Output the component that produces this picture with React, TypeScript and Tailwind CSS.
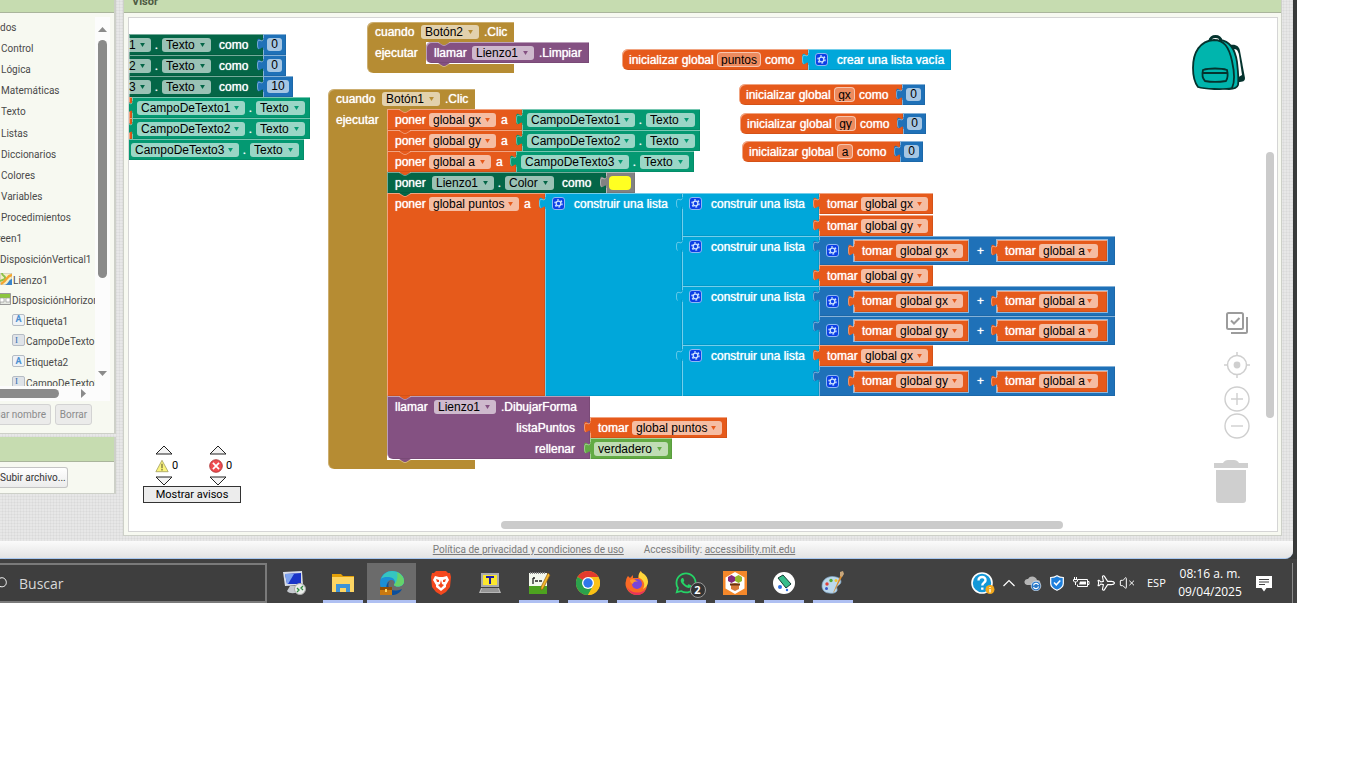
import React from 'react'
import clsx from 'clsx'
import { Plane, VolumeX } from 'lucide-react'
import { FaWhatsapp } from 'react-icons/fa'

// The text colour of a block repeats its fill, so plugs, notches and arrows can use currentColor
const tones = {
  gold: 'bg-[#b68c33] text-[#b68c33]',
  orange: 'bg-[#e65a1b] text-[#e65a1b]',
  setter: 'bg-[#046647] text-[#046647]',
  getter: 'bg-[#049972] text-[#049972]',
  purple: 'bg-[#845182] text-[#845182]',
  cyan: 'bg-[#00a7da] text-[#00a7da]',
  blue: 'bg-[#1f71b8] text-[#1f71b8]',
  green: 'bg-[#62ab44] text-[#62ab44]',
  gray: 'bg-[#828282] text-[#828282]',
}
type Tone = keyof typeof tones

const bevel =
  'shadow-[inset_1px_1px_0_rgba(255,255,255,0.45),inset_-1px_-1px_0_rgba(0,0,0,0.08)]'

interface BlockProps {
  tone: Tone
  className?: string
  children?: React.ReactNode
}

const Label = ({ className, children }: { className?: string; children: React.ReactNode }) => (
  <span
    className={clsx(
      'shrink-0 whitespace-nowrap text-[12px] leading-[14px] text-white [text-shadow:0_0_1px_#fff]',
      className
    )}
  >
    {children}
  </span>
)

const Dot = () => <Label className="w-[11px] text-center">.</Label>

const Field = ({ value, className, flush }: { value: string; className: string; flush?: boolean }) => (
  <span className={clsx('grid shrink-0 items-center', className)}>
    <select
      aria-label={value}
      defaultValue={value}
      className={clsx(
        'col-start-1 row-start-1 h-[14px] w-full appearance-none bg-white/60 text-[12px] leading-[14px] text-black',
        flush ? 'rounded-r-[3px]' : 'rounded-[3px] pl-1'
      )}
    >
      <option>{value}</option>
    </select>
    <svg
      viewBox="0 0 6 5"
      className="pointer-events-none col-start-1 row-start-1 mr-[6px] h-[4px] w-[5px] justify-self-end"
    >
      <path d="M0 0h6L3 5z" fill="currentColor" />
    </svg>
  </span>
)

const NameInput = ({ value, className }: { value: string; className: string }) => (
  <input
    aria-label="nombre"
    defaultValue={value}
    className={clsx(
      'h-[15px] shrink-0 rounded-[4px] border border-white/50 bg-white/30 text-center text-[12px] leading-[13px] text-black',
      className
    )}
  />
)

const Plug = () => (
  <svg viewBox="0 0 7 12" className="absolute top-1 -left-[6px] h-3 w-[7px]">
    <path d="M6.4 0c0 8-6.4-6.4-6.4 6s6.4-2 6.4 6H7V0z" fill="currentColor" />
    <path
      d="M6 1.500c-.8 4-5.500-3-5.500 4.500 0 3 .4 4.200 1.200 4.600"
      fill="none"
      stroke="#fff"
      strokeOpacity=".4"
    />
  </svg>
)

const Notch = ({ className }: { className: string }) => (
  <svg viewBox="0 0 12 4" className={clsx('absolute left-3 z-10 h-1 w-3', className)}>
    <path d="M0 0l5 3h2l5-3z" fill="currentColor" />
    <path d="M0 .5l5 3h2l5-3" fill="none" stroke="#fff" strokeOpacity=".35" />
  </svg>
)

const Value = ({ tone, className, children }: BlockProps) => (
  <div className={clsx('relative flex h-[21px] shrink-0 items-center', tones[tone], bevel, className)}>
    <Plug />
    {children}
  </div>
)

const Gear = () => (
  <button
    aria-label="configurar"
    className="flex h-[13px] w-[13px] shrink-0 items-center justify-center rounded-[3px] border border-[#8fb8f5] bg-[#0b3fe6]"
  >
    <svg viewBox="0 0 10 10" className="h-[9px] w-[9px]" fill="none" stroke="#cfe4ff">
      <circle cx="5" cy="5" r="2.600" strokeWidth="1.400" />
      <circle cx="5" cy="5" r="4" strokeWidth="1.500" strokeDasharray="2 2.190" />
    </svg>
  </button>
)

const Getter = ({ source }: { source: string }) => (
  <Value tone="getter" className="w-[178px] px-[5px]">
    <Field value={source} className="w-[108px]" />
    <Dot />
    <Field value="Texto" className="w-[49px]" />
  </Value>
)

const Take = ({ name, className, field }: { name: string; className?: string; field: string }) => (
  <Value tone="orange" className={clsx('pr-[5px] pl-2', className)}>
    <Label className="w-[34px]">tomar</Label>
    <Field value={name} className={field} />
  </Value>
)

const TakeGx = () => <Take name="global gx" field="w-[67px]" />
const TakeGy = () => <Take name="global gy" field="w-[67px]" />

const Sum = ({ name, className }: { name: string; className: string }) => (
  <Value tone="blue" className={clsx('w-[296px] pr-2 pl-[7px]', className)}>
    <Gear />
    <Take name={name} field="w-[67px]" className="ml-[15px] ring-1 ring-white/50" />
    <Label className="flex-1 pr-1 text-center">+</Label>
    <Take name="global a" field="w-[59px]" className="w-[110px] ring-1 ring-white/50" />
  </Value>
)

const ListBlock = ({ children }: { children: React.ReactNode }) => (
  <div className="flex">
    <div className={clsx('relative w-[137px] shrink-0', tones.cyan, bevel)}>
      <Plug />
      <div className="flex h-[21px] items-center gap-[9px] pl-[7px]">
        <Gear />
        <Label>construir una lista</Label>
      </div>
    </div>
    <div className="flex flex-col items-start">{children}</div>
  </div>
)

const SetGlobal = ({ name, field, width }: { name: string; field: string; width: string }) => (
  <div className={clsx('relative shrink-0', tones.orange, bevel, width)}>
    <div className="flex h-[21px] items-center pl-2">
      <Label className="w-[34px]">poner</Label>
      <Field value={name} className={field} />
      <Label className="ml-[5px]">a</Label>
    </div>
    <Notch className="top-full" />
  </div>
)

const SetProperty = ({ target, prop, field, partial, children }: {
  target: string
  prop: string
  field: string
  // only the tail of the block is inside the view
  partial?: boolean
  children: React.ReactNode
}) => (
  <div className="flex h-[21px]">
    <div
      className={clsx(
        'relative flex shrink-0 items-center pr-4',
        tones.setter,
        bevel,
        !partial && 'pl-2'
      )}
    >
      {!partial && <Label className="w-[37px]">poner</Label>}
      <Field value={target} className={field} flush={partial} />
      <Dot />
      <Field value={prop} className="w-[49px]" />
      <Label className="ml-2 w-7">como</Label>
      {!partial && <Notch className="top-full" />}
    </div>
    {children}
  </div>
)

const NumberValue = ({ value, wide }: { value: string; wide?: boolean }) => (
  <Value tone="blue" className={wide ? 'w-[30px] pl-[4px]' : 'w-[23px] pl-[4px]'}>
    <input
      aria-label="número"
      defaultValue={value}
      className={clsx(
        'h-[13px] rounded-[3px] bg-white/60 text-center text-[12px] leading-[13px] text-black',
        wide ? 'w-[22px]' : 'w-[15px]'
      )}
    />
  </Value>
)

const EventBlock = ({ button, className, children }: {
  button: string
  className: string
  children: React.ReactNode
}) => (
  <div className={clsx('absolute', className)}>
    <div className="flex h-5 w-[147px] items-center rounded-tl-[6px] bg-[#b68c33] pl-2 text-[#b68c33] shadow-[inset_1px_1px_0_rgba(255,255,255,0.3)]">
      <Label className="w-[46px]">cuando</Label>
      <Field value={button} className="w-[58px]" />
      <Label className="ml-[5px]">.Clic</Label>
    </div>
    <div className="flex">
      <div className="relative w-[59px] shrink-0 bg-[#b68c33] pl-2 shadow-[inset_1px_0_0_rgba(255,255,255,0.3)]">
        <Label className="block pt-1">ejecutar</Label>
      </div>
      <div className="relative pb-px text-[#b68c33]">
        <Notch className="top-0" />
        {children}
      </div>
    </div>
    <div className="h-[9px] w-[147px] rounded-bl-[6px] bg-[#b68c33] shadow-[inset_1px_0_0_rgba(255,255,255,0.3)]" />
  </div>
)

const GlobalBlock = ({ name, input, className, children }: {
  name: string
  input: string
  className: string
  children: React.ReactNode
}) => (
  <div className={clsx('absolute flex', className)}>
    <div className={clsx('flex h-[21px] items-center rounded-l-[6px] pr-[15px] pl-[7px]', tones.orange, bevel)}>
      <Label className="w-[88px]">inicializar global</Label>
      <NameInput value={name} className={input} />
      <Label className="ml-1 w-7">como</Label>
    </div>
    {children}
  </div>
)

const Triangle = ({ down }: { down?: boolean }) => (
  <svg viewBox="0 0 18 10" className="h-[10px] w-[18px]" fill="#f4f4f4" stroke="#222">
    <path d={down ? 'M1 1h16L9 9z' : 'M1 9h16L9 1z'} />
  </svg>
)

const Warnings = () => (
  <div className="absolute top-[427px] left-[14px] w-[98px] font-[Roboto,sans-serif] text-[11px] leading-[13px] text-black">
    <div className="flex h-[41px] justify-between pr-2 pl-3">
      <div className="flex w-6 flex-col justify-between">
        <Triangle />
        <span className="flex items-center gap-[3px]">
          <svg viewBox="0 0 16 16" className="h-[14px] w-[14px] shrink-0">
            <path d="M8 1.500L15 14.500H1z" fill="#fbf47c" stroke="#a9a565" strokeLinejoin="round" />
            <path d="M8 5.500v5M8 11.500v1.500" stroke="#6d6a3c" strokeWidth="1.400" />
          </svg>
          0
        </span>
        <Triangle down />
      </div>
      <div className="flex w-6 flex-col justify-between">
        <Triangle />
        <span className="flex items-center gap-[3px]">
          <svg viewBox="0 0 16 16" className="h-[14px] w-[14px] shrink-0">
            <circle cx="8" cy="8" r="7.200" fill="#ef4c50" stroke="#a33" />
            <path d="M4.500 4.500l7 7M11.500 4.500l-7 7" stroke="#fff" strokeWidth="2" />
          </svg>
          0
        </span>
        <Triangle down />
      </div>
    </div>
    <button className="h-[17px] w-full border border-[#333] bg-[#ececec] text-center leading-[14px]">
      Mostrar avisos
    </button>
  </div>
)

const Backpack = () => (
  <svg viewBox="0 0 54 56" className="absolute top-[17px] right-[31px] h-[56px] w-[54px]">
    <path d="M38 10c6-1 9 1 10 6l5 27c0 3-2 4-7 4z" fill="#05332e" />
    <path d="M42 14c3 0 4 2 5 6l3 20-5 3z" fill="#fff" />
    <path d="M18 6c0-6 11-6 11 0" fill="none" stroke="#05332e" strokeWidth="3" />
    <path
      d="M28 5c10 1 15 9 17 22 1 9 2 17 1 23-1 3-5 4-9 4l-14-2z"
      fill="#00b5ad"
      stroke="#05332e"
      strokeWidth="1.800"
    />
    <path
      d="M22 5C8 6 1 17 1 33c0 9 2 15 5 19 6 2 26 3 34 1 3-6 2-18 0-27C37 12 32 5 22 5z"
      fill="#00b5ad"
      stroke="#05332e"
      strokeWidth="1.800"
    />
    <path
      d="M11 35c6-2 18-2 24 0 1 4 1 8-1 11-6 1-16 1-21 0-3-3-3-7-2-11zM10 38h26"
      fill="none"
      stroke="#05332e"
      strokeWidth="1.800"
    />
  </svg>
)

const Controls = () => (
  <div className="absolute top-[293px] right-[27px] flex w-[36px] flex-col items-end text-[#cfcfcf]">
    <button aria-label="seleccionar" className="mr-px h-[24px] w-[24px]">
      <svg viewBox="0 0 24 24" fill="none" stroke="#9c9c9c" strokeWidth="2">
        <rect x="2" y="2" width="16" height="16" rx="1.500" />
        <path d="M6 9.500l3 3L14.500 7" />
        <path d="M22 6v14.500a1.500 1.500 0 0 1-1.500 1.500H6" />
      </svg>
    </button>
    <button aria-label="centrar" className="mt-[17px] h-[26px] w-[26px]">
      <svg viewBox="0 0 26 26" fill="none" stroke="currentColor" strokeWidth="1.500">
        <circle cx="13" cy="13" r="9.500" />
        <circle cx="13" cy="13" r="3.400" fill="currentColor" stroke="none" />
        <path d="M13 0v4M13 22v4M0 13h4M22 13h4" />
      </svg>
    </button>
    <button aria-label="acercar" className="mt-2 h-[26px] w-[26px]">
      <svg viewBox="0 0 26 26" fill="none" stroke="currentColor" strokeWidth="1.400">
        <circle cx="13" cy="13" r="12" />
        <path d="M7 13h12M13 7v12" />
      </svg>
    </button>
    <button aria-label="alejar" className="mt-px h-[26px] w-[26px]">
      <svg viewBox="0 0 26 26" fill="none" stroke="currentColor" strokeWidth="1.400">
        <circle cx="13" cy="13" r="12" />
        <path d="M7 13h12" />
      </svg>
    </button>
    <svg viewBox="0 0 34 44" className="mt-[21px] h-[44px] w-[34px] self-start" fill="currentColor">
      <path d="M0 3h9c1-2 3-3 5-3h6c2 0 4 1 5 3h9v5H0z" />
      <path d="M2 10h30v30a3 3 0 0 1-3 3H5a3 3 0 0 1-3-3z" />
    </svg>
  </div>
)

const Workspace = () => (
  <div className="relative h-[515px] overflow-hidden border border-[#d5d5d5] bg-white font-['Liberation_Sans',Arial,sans-serif]">
    <div className="absolute top-[16px] left-0">
      <SetProperty target="1" prop="Texto" field="w-[22px]" partial>
        <NumberValue value="0" />
      </SetProperty>
      <SetProperty target="2" prop="Texto" field="w-[22px]" partial>
        <NumberValue value="0" />
      </SetProperty>
      <SetProperty target="3" prop="Texto" field="w-[22px]" partial>
        <NumberValue value="10" wide />
      </SetProperty>
      <div className="flex">
        <div className={clsx('w-[3px]', tones.orange, bevel)} />
        <Getter source="CampoDeTexto1" />
      </div>
      <div className="flex">
        <div className={clsx('w-[3px]', tones.orange, bevel)} />
        <Getter source="CampoDeTexto2" />
      </div>
      <div className="-ml-[3px] flex">
        <Getter source="CampoDeTexto3" />
      </div>
    </div>

    <EventBlock button="Botón2" className="top-1 left-[238px]">
      <div className={clsx('relative flex h-[21px] w-[163px] items-center rounded-l-[5px] pl-2', tones.purple, bevel)}>
        <Label className="w-[38px]">llamar</Label>
        <Field value="Lienzo1" className="w-[62px]" />
        <Label className="ml-[5px]">.Limpiar</Label>
        <Notch className="top-full" />
      </div>
    </EventBlock>

    <EventBlock button="Botón1" className="top-[71px] left-[199px]">
      <div className="flex">
        <SetGlobal name="global gx" field="w-[67px]" width="w-[135px]" />
        <Getter source="CampoDeTexto1" />
      </div>
      <div className="flex">
        <SetGlobal name="global gy" field="w-[67px]" width="w-[135px]" />
        <Getter source="CampoDeTexto2" />
      </div>
      <div className="flex">
        <SetGlobal name="global a" field="w-[62px]" width="w-[129px]" />
        <Getter source="CampoDeTexto3" />
      </div>
      <SetProperty target="Lienzo1" prop="Color" field="w-[62px]">
        <Value tone="gray" className="w-[29px] pl-[3px]">
          <button aria-label="color" className="h-[14px] w-[22px] rounded-[4px] bg-[#ffff22]" />
        </Value>
      </SetProperty>
      <div className="flex">
        <SetGlobal name="global puntos" field="w-[90px]" width="w-[158px]" />
        <ListBlock>
          <ListBlock>
            <TakeGx />
            <div className="pt-px">
              <TakeGy />
            </div>
          </ListBlock>
          <ListBlock>
            <Sum name="global gx" className="h-[29px]" />
            <TakeGy />
          </ListBlock>
          <ListBlock>
            <Sum name="global gx" className="h-[30px]" />
            <Sum name="global gy" className="h-[29px]" />
          </ListBlock>
          <ListBlock>
            <TakeGx />
            <Sum name="global gy" className="h-[30px]" />
          </ListBlock>
        </ListBlock>
      </div>
      <div className="flex">
        <div className={clsx('relative w-[203px] rounded-bl-[6px] pr-[15px] pl-2', tones.purple, bevel)}>
          <div className="flex h-[21px] items-center">
            <Label className="w-[39px]">llamar</Label>
            <Field value="Lienzo1" className="w-[62px]" />
            <Label className="ml-[5px]">.DibujarForma</Label>
          </div>
          <div className="flex h-[21px] items-center justify-end">
            <Label>listaPuntos</Label>
          </div>
          <div className="flex h-[21px] items-center justify-end">
            <Label>rellenar</Label>
          </div>
          <Notch className="top-full" />
        </div>
        <div className="flex flex-col items-start pt-[21px]">
          <Take name="global puntos" field="w-[90px]" />
          <Value tone="green" className="px-1">
            <Field value="verdadero" className="w-[74px]" />
          </Value>
        </div>
      </div>
    </EventBlock>

    <GlobalBlock name="puntos" input="w-[44px]" className="top-[31px] left-[493px]">
      <Value tone="cyan" className="w-[143px] gap-[9px] pl-[7px]">
        <Gear />
        <Label>crear una lista vacía</Label>
      </Value>
    </GlobalBlock>
    <GlobalBlock name="gx" input="w-[21px]" className="top-[66px] left-[610px]">
      <NumberValue value="0" />
    </GlobalBlock>
    <GlobalBlock name="gy" input="w-[21px]" className="top-[95px] left-[611px]">
      <NumberValue value="0" />
    </GlobalBlock>
    <GlobalBlock name="a" input="w-4" className="top-[123px] left-[613px]">
      <NumberValue value="0" />
    </GlobalBlock>

    <Backpack />
    <Controls />
    <Warnings />
    <div className="absolute top-[134px] right-[3px] h-[266px] w-2 rounded-full bg-[#cbcbcb]" />
    <div className="absolute right-[214px] bottom-[2px] h-2 w-[562px] rounded-full bg-[#cbcbcb]" />
  </div>
)

const categories = [
  'Control',
  'Lógica',
  'Matemáticas',
  'Texto',
  'Listas',
  'Diccionarios',
  'Colores',
  'Variables',
  'Procedimientos',
]

const LetterIcon = ({ children, wide }: { children: string; wide?: boolean }) => (
  <span
    className={clsx(
      'mb-1 flex h-3 w-[13px] shrink-0 items-center rounded-[2px] border border-[#b5bcc4] text-[9px] leading-none',
      wide
        ? "bg-[#dfe3e8] pl-[2px] font-['Liberation_Serif',serif] text-[#2f6fb0]"
        : 'justify-center bg-[#eef2f6] font-bold text-[#4a8fd0]'
    )}
  >
    {children}
  </span>
)

const TreePanel = () => (
  <section className="border-r-2 border-b border-[#cdd0c8] bg-[#f7f9f1]">
    <div className="h-[13px] border-b border-[#aab59c] bg-[#c6dcb0]" />
    <div className="flex h-[373px] overflow-hidden pt-1 text-[10px] leading-3 text-[#4a4a4a]">
      <div className="w-[95px] shrink-0 overflow-hidden whitespace-nowrap">
        <ul className="grid h-[212px] auto-rows-fr items-center">
          <li>dos</li>
          {categories.map((name) => (
            <li key={name} className="pl-px">
              {name}
            </li>
          ))}
        </ul>
        <ul className="grid h-[165px] auto-rows-fr items-center">
          <li className="-ml-[3px]">reen1</li>
          <li>DisposiciónVertical1</li>
          <li className="flex items-center gap-px">
            <svg viewBox="0 0 12 12" className="mb-1 h-3 w-3 shrink-0">
              <path d="M0 0h12v12H0z" fill="#f5efc8" stroke="#bbb" />
              <path d="M2 0c0 4 4 2 3 6L0 8" fill="none" stroke="#8cc24a" strokeWidth="2" />
              <path d="M12 2C6 3 8 7 1 11" fill="none" stroke="#f3a530" strokeWidth="2.500" />
              <path d="M12 6c-3 0-3 4-7 6h7z" fill="#3b86cc" />
            </svg>
            Lienzo1
          </li>
          <li className="flex items-center gap-px">
            <svg viewBox="0 0 11 12" className="mb-1 h-3 w-[11px] shrink-0">
              <path d="M0 .5h10.500v11H0z" fill="#e5e8e2" stroke="#999" />
              <path d="M0 1h10v4H0z" fill="#8cc63e" />
              <path d="M0 5h4v4H0zM6 5h4v4H6z" fill="#fff" stroke="#999" strokeWidth=".7" />
            </svg>
            DisposiciónHorizon
          </li>
          <li className="flex items-center gap-px pl-3">
            <LetterIcon>A</LetterIcon>Etiqueta1
          </li>
          <li className="flex items-center gap-px pl-3">
            <LetterIcon wide>I</LetterIcon>CampoDeTexto1
          </li>
          <li className="flex items-center gap-px pl-3">
            <LetterIcon>A</LetterIcon>Etiqueta2
          </li>
          <li className="flex items-center gap-px pl-3">
            <LetterIcon wide>I</LetterIcon>CampoDeTexto2
          </li>
        </ul>
      </div>
      <div className="flex w-[15px] flex-col items-center bg-[#fcfcfc] pt-[10px] pb-2">
        <svg viewBox="0 0 9 5" className="h-[5px] w-[9px]">
          <path d="M0 5h9L4.500 0z" fill="#8b8b8b" />
        </svg>
        <div className="mt-2 h-[238px] w-[9px] rounded-full bg-[#8b8b8b]" />
        <svg viewBox="0 0 9 5" className="mt-auto mb-[2px] h-[5px] w-[9px]">
          <path d="M0 0h9L4.500 5z" fill="#8b8b8b" />
        </svg>
      </div>
    </div>
    <div className="mr-1 flex h-[15px] items-center bg-[#fcfcfc]">
      <div className="h-[9px] w-[59px] rounded-r-full bg-[#8b8b8b]" />
      <svg viewBox="0 0 5 9" className="ml-[22px] h-[9px] w-[5px]">
        <path d="M0 0v9l5-4.500z" fill="#8b8b8b" />
      </svg>
    </div>
    <div className="flex gap-1 pt-[3px] pb-2 text-[10px] text-[#8a8a8a]">
      <button className="flex h-[21px] w-[51px] justify-end rounded-r-[3px] border border-l-0 border-[#d3d3d3] bg-[#ebebea] pr-1 leading-[19px] whitespace-nowrap">
        iar nombre
      </button>
      <button className="h-[21px] w-[37px] rounded-[3px] border border-[#d3d3d3] bg-[#ebebea] leading-[19px]">
        Borrar
      </button>
    </div>
  </section>
)

const MediaPanel = () => (
  <section className="border-r-2 border-b border-[#cdd0c8] bg-[#f7f9f1]">
    <div className="h-[25px] border-b border-[#aab59c] bg-[#c6dcb0]" />
    <div className="flex py-[5px]">
      <button className="h-[21px] w-[68px] rounded-r-[3px] border border-l-0 border-[#c4c4c4] bg-linear-to-b from-white to-[#ececec] text-left text-[10px] leading-[19px] whitespace-nowrap text-[#333]">
        Subir archivo...
      </button>
    </div>
  </section>
)

interface TaskProps {
  label: string
  open?: boolean
  active?: boolean
  children: React.ReactNode
}

const Task = ({ label, open, active, children }: TaskProps) => (
  <button
    aria-label={label}
    className={clsx('flex h-10 w-[49px] flex-col items-center', active && 'bg-[#6b6b6b]')}
  >
    <span className="flex h-[37px] w-6 items-center pt-[3px]">{children}</span>
    <span className={clsx('h-[3px]', active ? 'w-full' : 'w-10', open && 'bg-[#afc0f2]')} />
  </button>
)

const Taskbar = () => (
  <footer className="flex h-11 items-start bg-[#414141] pt-1 font-['Open_Sans',sans-serif] text-white">
    <div className="flex h-10 w-[267px] shrink-0 items-center gap-3 border-2 border-l-0 border-[#7a7a7a] bg-[#3e3e3e]">
      <svg viewBox="0 0 7 12" className="h-3 w-[7px]" fill="none" stroke="#fff">
        <path d="M0 1.200c3-1.500 6.300.8 6.300 4.300S3 10.500 0 9.500" />
      </svg>
      <input
        aria-label="Buscar"
        placeholder="Buscar"
        className="w-40 bg-transparent text-[14px] placeholder:text-[#d8d8d8]"
      />
    </div>
    <div className="flex pl-[2px]">
      <Task label="Escritorio remoto">
        <svg viewBox="0 0 24 24">
          <path d="M1 1l19-1 1 14-18 1z" fill="#d8dde8" />
          <path d="M3 3l16-1v11L5 13z" fill="#1a35c8" />
          <path d="M3 3l9 0-6 10H5z" fill="#7fa4f0" />
          <path d="M8 15h7l2 5c-3 3-10 3-12 0z" fill="#c5c9ce" />
          <circle cx="18" cy="18" r="5.500" fill="#e9ece9" stroke="#aaa" />
          <path d="M15 17l2 2-2 2M21 15l-2 2 2 2" stroke="#2e8b3e" fill="none" strokeWidth="1.300" />
        </svg>
      </Task>
      <Task label="Explorador" open>
        <svg viewBox="0 0 24 24">
          <path d="M1 3h9l2 2h11v16H1z" fill="#e3a008" />
          <path d="M1 6h22v15H1z" fill="#fdd563" />
          <path d="M5 21v-8h14v8h-4v-4H9v4z" fill="#3d93d8" />
        </svg>
      </Task>
      <Task label="Edge" open active>
        <svg viewBox="0 0 24 24">
          <path d="M0 12C0 4 6 0 12 0s12 4 12 10c0 4-3 5.500-6 5.500s-4-1-4-2c1-1 1-4-2-4.500C6 8 4 18 12 23 5 23 0 18 0 12z" fill="#1b8fd6" />
          <path d="M1 8C3 3 7 0 12 0c7 0 12 4.500 12 10 0 4-3 5.500-6 5.500-2 0-4-.6-4-2 2-2 1-6-3-7C7 5.500 3 6 1 8z" fill="#36c5c0" />
          <path d="M17 1.200c4 1.800 7 5 7 8.800 0 4-3 5.500-6 5.500-2 0-4-.6-4-2 3-2 4-8 3-12.300z" fill="#66d36a" />
          <path d="M10 10c-4 4-1 13 12 8-2 4-6 6-10 6-6 0-8-11-2-14z" fill="#0c4f9c" />
          <path d="M0 16h12v8H0z" fill="#c9780f" />
          <path d="M0 16h12v3H0z" fill="#8e4d06" />
          <path d="M5 18h2v3H5z" fill="#ffd45c" />
        </svg>
      </Task>
      <Task label="Brave">
        <svg viewBox="0 0 24 24">
          <path d="M7 0h10l2 2 2 0 1 4-1 10-4 5-5 3-5-3-4-5L2 6l1-4h2z" fill="#f4481e" />
          <path d="M6 5l4 1h4l4-1 2 4-3 5 0 2-5 4-5-4V14L4 9z" fill="#fff" />
          <path d="M7 8l3 1v2l-2 0zM17 8l-3 1v2l2 0zM12 9l1 4 2 1-3 3-3-3 2-1z" fill="#f4481e" />
        </svg>
      </Task>
      <Task label="Terminal">
        <svg viewBox="0 0 24 24">
          <path d="M3 2h18v14H3z" fill="#aaa" />
          <path d="M5 4h14v10H5z" fill="#fde82c" />
          <path d="M8 5h8v2h-3v6h-2V7H8z" fill="#1c1ca8" />
          <path d="M3 17h18l2 5H1z" fill="#b7b7b7" />
          <path d="M4 18h16M3 20h18" stroke="#777" />
        </svg>
      </Task>
      <Task label="Notepad++" open>
        <svg viewBox="0 0 24 24">
          <path d="M2 2h18v21H2z" fill="#f4f8ee" />
          <path d="M2 15h18v8H2z" fill="#4da31f" />
          <path d="M3 2h16" stroke="#888" strokeWidth="2" strokeDasharray="1 1" />
          <path d="M6 7v6M8 10h3M12 10h3M6 7h2" stroke="#222" strokeWidth="1.300" />
          <path d="M21 2l2 2-7 14-2 1 0-3z" fill="#f5b82e" stroke="#8b5c10" strokeWidth=".7" />
        </svg>
      </Task>
      <Task label="Chrome" open>
        <svg viewBox="0 0 24 24">
          <circle cx="12" cy="12" r="12" fill="#fbc116" />
          <path d="M12 12L1.600 6A12 12 0 0 1 22.400 6z" fill="#e33b2e" />
          <path d="M12 12L1.600 6A12 12 0 0 0 12 24l5-9z" fill="#2ba24c" />
          <path d="M12 6h10.400A12 12 0 0 1 12 24l5.200-9z" fill="#fbc116" />
          <circle cx="12" cy="12" r="6" fill="#fff" />
          <circle cx="12" cy="12" r="4.700" fill="#2f78ea" />
        </svg>
      </Task>
      <Task label="Firefox" open>
        <svg viewBox="0 0 24 24">
          <path d="M3 5l2 2 3-3 0 3 5 0c1-3 1-5 3-7 0 3 3 4 5 8 3 6 0 16-9 16S-1 15 1 10c0-2 1-4 2-5z" fill="#fb6a25" />
          <path d="M16 0c-2 2-3 4-2 7 4 1 7 6 4 11 8-4 5-12 1-15-2-1-3-2-3-3z" fill="#ffd53a" />
          <path d="M2 16c3 6 13 8 19 2-2 4-5 6-9 6-5 0-9-4-10-8z" fill="#e8335c" />
          <circle cx="12" cy="13" r="5" fill="#7a45d8" />
          <path d="M5 9c3-2 6 0 8 2-3-1-5 0-5 2-2-1-3-2-3-4z" fill="#ff9a2b" />
        </svg>
      </Task>
      <Task label="WhatsApp" open>
        <span className="relative">
          <FaWhatsapp className="h-6 w-6 text-[#25d366]" />
          <span className="absolute top-[11px] left-4 flex h-4 w-4 items-center justify-center rounded-full border border-[#9a9a9a] bg-[#333] text-[11px] font-bold">
            2
          </span>
        </span>
      </Task>
      <Task label="App Inventor" open>
        <svg viewBox="0 0 24 24">
          <path d="M0 0h24v24H0z" fill="#f5882a" />
          <path d="M12 1l9.500 5.500v11L12 23l-9.500-5.500v-11z" fill="#fff" />
          <path d="M5 6l3.500-2L12 6v4l-3.500 2L5 10z" fill="#86297a" />
          <path d="M12 6l3.500-2L19 6v4l-3.500 2L12 10z" fill="#92b92c" />
          <path d="M8 13l4-1 4 1v5l-4 2-4-2z" fill="#d67a3a" />
          <path d="M7 12.500h10v2H7z" fill="#6b3412" />
        </svg>
      </Task>
      <Task label="Emulador" open>
        <svg viewBox="0 0 24 24">
          <circle cx="12" cy="12" r="11" fill="#fff" />
          <path d="M6 7l5-3 8 9-5 4z" fill="#36bd8b" stroke="#123d35" />
          <circle cx="8" cy="16" r="2" fill="#2d6de0" />
          <circle cx="15" cy="19" r="1.200" fill="#2d6de0" />
        </svg>
      </Task>
      <Task label="Paint" open>
        <svg viewBox="0 0 24 24">
          <path d="M1 15C1 8 8 4 15 6c5 1 6 5 4 7s-4 2-3 5-3 5-8 4c-4 0-7-3-7-7z" fill="#bcd8ec" stroke="#7ea5c4" strokeWidth=".7" />
          <circle cx="6" cy="13" r="1.700" fill="#e0413a" />
          <circle cx="10" cy="9.500" r="1.700" fill="#50a93b" />
          <circle cx="5.500" cy="17.500" r="1.500" fill="#3757c9" />
          <circle cx="15" cy="9.500" r="1.500" fill="#f0c330" />
          <path d="M20 3l2 1-9 17-1 1z" fill="#d88b2e" />
          <path d="M19 1l3-1 1 3-2 3-2-1z" fill="#c9a77b" />
        </svg>
      </Task>
    </div>
    <div className="ml-auto flex h-10 items-center">
      <svg viewBox="0 0 24 24" className="h-6 w-6">
        <circle cx="11" cy="12" r="10" fill="#1398d8" stroke="#fff" strokeWidth="1.600" />
        <path d="M7.500 9.500c0-5 7.500-4.500 7 0-.2 2.200-3.200 2.300-3.200 5M11.300 16.500v2.300" fill="none" stroke="#fff" strokeWidth="2.400" />
        <circle cx="19" cy="18.500" r="4.500" fill="#f3a91c" />
        <path d="M19 16v1M19 18v3.500" stroke="#fff" strokeWidth="1.300" />
      </svg>
      <svg viewBox="0 0 12 8" className="ml-2 h-2 w-3" fill="none" stroke="#fff" strokeWidth="1.200">
        <path d="M.5 7L6 1.500 11.500 7" />
      </svg>
      <svg viewBox="0 0 18 16" className="ml-[9px] h-4 w-[18px]">
        <path d="M3 10a3 3 0 0 1 1-6c2-4 8-3 9 1 3 0 4 2 3 5z" fill="#b5b5b5" />
        <circle cx="12" cy="11" r="4.800" fill="#2878c8" stroke="#fff" strokeWidth=".6" />
        <path d="M9.500 10.500a2.600 2.600 0 0 1 5-.5M14.500 11.500a2.600 2.600 0 0 1-5 .5" fill="none" stroke="#fff" strokeWidth="1.200" />
      </svg>
      <svg viewBox="0 0 14 16" className="ml-2 h-4 w-[14px]">
        <path d="M7 .7C5 2 3 2.500.7 2.500v6C.7 12 4 14 7 15.300 10 14 13.300 12 13.300 8.500v-6C11 2.500 9 2 7 .7z" fill="#1d7fdc" stroke="#fff" strokeWidth="1.200" />
        <path d="M4 7.500l2.300 2.300L10.300 5.500" fill="none" stroke="#fff" strokeWidth="1.500" />
      </svg>
      <svg viewBox="0 0 17 12" className="ml-[9px] h-3 w-[17px]" fill="none" stroke="#fff">
        <path d="M5 2.500h9.500v7H4.500v-2M14.500 4.500h1.500v3h-1.500" />
        <path d="M7 4.500h6v3H6z" fill="#fff" stroke="none" />
        <path d="M1.500 0v2.500M3.500 0v2.500M.5 2.500h4v1.500l-1 1h-2l-1-1zM2.500 5v3" />
      </svg>
      <Plane className="ml-[6px] h-[18px] w-[18px] rotate-45" strokeWidth={1.5} />
      <VolumeX className="ml-[5px] h-4 w-4" strokeWidth={1.5} />
      <span className="ml-3 w-[22px] text-[11px]">ESP</span>
      <div className="ml-[9px] w-[64px] text-center text-[12px] leading-[18px] whitespace-nowrap">
        <div>08:16 a. m.</div>
        <div>09/04/2025</div>
      </div>
      <svg viewBox="0 0 17 17" className="ml-[14px] h-[17px] w-[17px]">
        <path d="M0 1h16v12h-5.500L8 16.500 5.500 13H0z" fill="#fff" />
        <path d="M3 4.500h10M3 7h10M3 9.500h6" stroke="#414141" />
      </svg>
      <div className="mr-1 ml-[19px] h-10 w-px bg-[#8a8a8a]" />
    </div>
  </footer>
)

export default function App() {
  return (
    <div className="min-h-screen bg-white">
      <div className="mr-[69px] bg-[#383a3a] font-[Roboto,sans-serif]">
        <div className="mr-1 overflow-hidden rounded-br-[8px] border-b border-[#a9c8f0] bg-[#e7e7e7]">
          <div className="flex gap-2 bg-[repeating-linear-gradient(0deg,#0000_0_2px,#00000008_2px_3px),repeating-linear-gradient(90deg,#0000_0_2px,#00000008_2px_3px)] pr-[11px] pb-[5px]">
            <div className="flex w-[116px] shrink-0 flex-col gap-[3px]">
              <TreePanel />
              <MediaPanel />
            </div>
            <main className="-ml-px min-w-0 flex-1 border border-t-0 border-[#cdd0c8] bg-[#f7f9f1]">
              <h1 className="h-[13px] overflow-hidden border-b border-[#aab59c] bg-[#c6dcb0] pl-2 text-[11px] leading-[3px] font-bold text-[#4d5a42]">
                Visor
              </h1>
              <div className="pt-1 pr-[3px] pb-[3px] pl-1">
                <Workspace />
              </div>
            </main>
          </div>
          <div className="flex h-[17px] justify-center gap-5 bg-linear-to-b from-[#fbfbfb] to-[#e4e4e4] pr-[65px] text-[10px] leading-[17px] whitespace-nowrap text-[#7b7b7b]">
            <a href="#privacidad" className="underline">
              Política de privacidad y condiciones de uso
            </a>
            <span>
              Accessibility:{' '}
              <a href="#accesibilidad" className="underline">
                accessibility.mit.edu
              </a>
            </span>
          </div>
        </div>
        <Taskbar />
      </div>
    </div>
  )
}
